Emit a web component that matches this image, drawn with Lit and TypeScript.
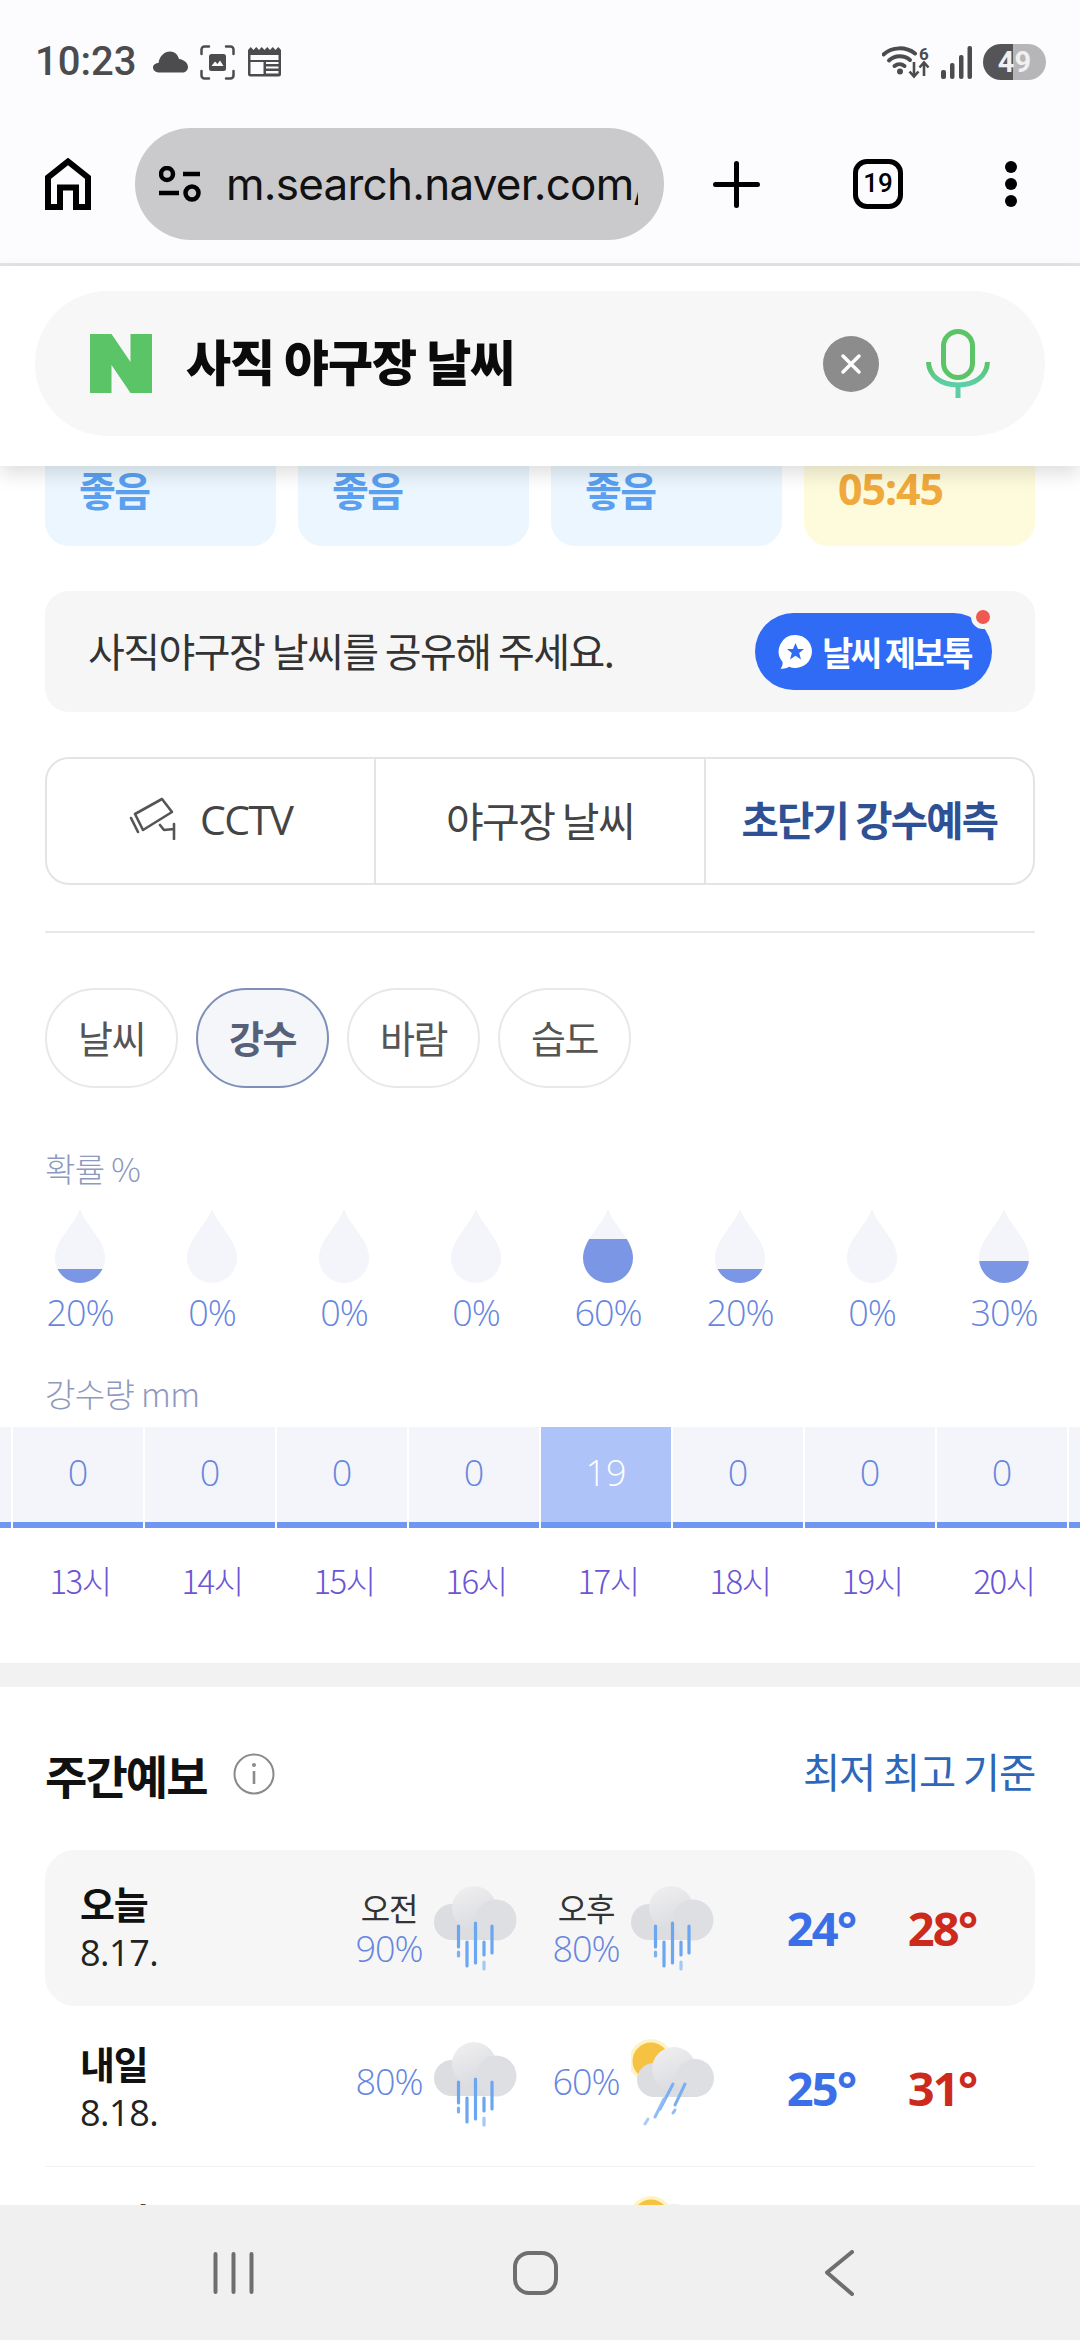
import { LitElement, html, css, svg, unsafeCSS } from "lit";
import { customElement } from "lit/decorators.js";

const KR = unsafeCSS(`"Noto Sans CJK KR", "Noto Sans", sans-serif`);

const dropsData = [20, 0, 0, 0, 60, 20, 0, 30];
const fillH: Record<number, number> = { 0: 0, 20: 14, 30: 22, 60: 44 };
const amounts = ["", "0", "0", "0", "0", "19", "0", "0", "0", ""];
const hours = ["13시", "14시", "15시", "16시", "17시", "18시", "19시", "20시"];
const DROP = "M25 0C28 10 41 24 46 34C49 40 50 45 50 49A25 25 0 0 1 0 49C0 45 1 40 4 34C9 24 22 10 25 0Z";

const cloudDefs = (id: string) => svg`<defs>
  <linearGradient id="${id}" x1="0.3" y1="0" x2="0.7" y2="1"><stop offset="0" stop-color="#eeeef0"/><stop offset="1" stop-color="#d9dadf"/></linearGradient>
</defs>`;

const rainIcon = () => html`<svg class="wx" width="83" height="85" viewBox="0 0 83 85">
  ${cloudDefs("c1")}
  <circle cx="18" cy="36" r="18" fill="#dcdde1"/>
  <rect x="18" y="30" width="46" height="24" fill="#dcdde1"/>
  <circle cx="40" cy="22" r="22" fill="url(#c1)"/>
  <circle cx="62" cy="34" r="20.5" fill="#dedfe3"/>
  <g stroke-width="3.2" stroke-linecap="round" fill="none">
    <path d="M24.5 40V61M33 56V80M41.5 37V77M50 56V69M58 40V67" stroke="#6ba6f0"/>
    <path d="M24.5 66V70" stroke="#7db0f1"/>
    <path d="M50 76V83" stroke="#a3c8f5"/>
  </g>
</svg>`;

const sunIcon = () => html`<svg class="wx" width="83" height="93" viewBox="0 0 83 93">
  ${cloudDefs("c2")}
  <circle cx="20" cy="22" r="22" fill="#fdf3c4"/>
  <circle cx="20" cy="22" r="18.5" fill="#f5c242"/>
  <circle cx="23" cy="41" r="17" fill="#dcdde1"/>
  <rect x="23" y="34" width="44" height="24" fill="#dcdde1"/>
  <circle cx="43" cy="30" r="22" fill="url(#c2)"/>
  <circle cx="64" cy="39" r="19" fill="#dedfe3"/>
  <g stroke-width="3" stroke-linecap="round" fill="none">
    <path d="M42 45L29 70M54 45L44 66" stroke="#78b0f2"/>
    <path d="M33 60L24 78M44 71L42 74" stroke="#8fbdf3"/>
    <path d="M14 85L17 80" stroke="#a9ccf6"/>
  </g>
</svg>`;

@customElement("app-root")
export class AppRoot extends LitElement {
  static styles = css`
    :host { display: block; width: 1080px; height: 2340px; overflow: hidden; background: #fff; font-family: ${KR}; }
    .page { width: 1080px; height: 2340px; display: flex; flex-direction: column; overflow: hidden; }

    .status { height: 124px; flex: none; background: #fcfcff; display: flex; align-items: center; padding: 0 34px 0 35px; color: #4c4c4e; }
    .time { font: 500 40px/1 Roboto, sans-serif; width: 100px; margin-right: 18px; white-space: nowrap; }
    .status svg { display: block; flex: none; }
    .st1 { margin-right: 12px; }
    .st2 { margin-right: 13px; }
    .spacer { flex: 1; }
    .st3 { margin-right: 8px; }
    .st4 { margin-right: 11px; }
    .batt { width: 63px; height: 36px; border-radius: 18px; background: linear-gradient(90deg, #555557 0 48%, #b6b6b8 48% 100%); color: #f0f0f0; font: 700 29px/36px Roboto, sans-serif; text-align: center; }

    .toolbar { height: 142px; flex: none; background: #fcfcff; border-bottom: 3px solid #e3e3ea; box-sizing: border-box; display: flex; align-items: center; padding: 0 0 19px 45px; }
    .toolbar svg { display: block; flex: none; }
    .url { width: 529px; height: 112px; margin-left: 44px; border-radius: 56px; background: #cacacc; display: flex; align-items: center; padding-left: 24px; box-sizing: border-box; flex: none; }
    .urltext { font: 400 44px/1.2 Inter, Roboto, sans-serif; letter-spacing: -0.75px; color: #111; width: 412px; margin-left: 24px; overflow: hidden; white-space: nowrap; }
    .plus { margin-left: 49px; }
    .tabs19 { margin-left: 93px; width: 50px; height: 50px; border: 5.5px solid #000; border-radius: 14px; box-sizing: border-box; font: 500 26px/39px Roboto, sans-serif; color: #000; text-align: center; flex: none; }
    .dots { margin-left: 101px; }

    .searchwrap { height: 200px; flex: none; background: #fff; box-sizing: border-box; padding: 25px 35px 30px; box-shadow: 0 8px 18px rgba(0,0,0,.13); position: relative; z-index: 2; }
    .search { height: 145px; border-radius: 73px; background: #f7f7f7; display: flex; align-items: center; padding-left: 55px; }
    .search svg { display: block; flex: none; }
    .q { font: 900 49px/1 ${KR}; letter-spacing: -1.1px; color: #0b0b0b; margin-left: 34px; width: 637px; white-space: nowrap; padding-bottom: 8px; }
    .clear { width: 56px; height: 56px; }
    .mic { margin-left: 47px; }

    .content { flex: 1; min-height: 0; overflow: hidden; position: relative; }
    .cards { display: flex; gap: 22px; padding: 0 45px; height: 80px; }
    .card { flex: 1; height: 80px; border-radius: 0 0 24px 24px; background: #ebf6fe; color: #5a9ff0; font: 700 40px/46px ${KR}; letter-spacing: -1.5px; padding-left: 34px; box-sizing: border-box; white-space: nowrap; }
    .card.y { background: #fefbdc; color: #f0a93c; font: 700 43px/46px "Noto Sans", sans-serif; letter-spacing: -1.1px; }

    .share { margin: 45px 45px 0; height: 121px; border-radius: 24px; background: #f6f6f6; display: flex; align-items: center; justify-content: space-between; padding: 0 43px; }
    .share span.t { font-size: 40px; letter-spacing: -1.55px; color: #333; white-space: nowrap; padding-bottom: 4px; }
    .btn { width: 237px; height: 77px; border-radius: 39px; background: #2f6bf5; color: #fff; font-weight: 700; font-size: 34px; letter-spacing: -2.5px; display: flex; align-items: center; box-sizing: border-box; padding-left: 23px; gap: 9px; position: relative; white-space: nowrap; }
    .btn i { position: absolute; right: -3px; top: -8px; width: 14px; height: 14px; border-radius: 50%; background: #ee5a4f; border: 5px solid #f6f6f6; }

    .tabs { margin: 45px 45px 0; height: 128px; border: 2px solid #e4e4e4; border-radius: 24px; display: flex; box-sizing: border-box; }
    .tab { flex: 1; display: flex; align-items: center; justify-content: center; font-size: 41px; letter-spacing: -1.6px; color: #444; gap: 24px; padding-bottom: 5px; white-space: nowrap; }
    .tab + .tab { border-left: 2px solid #e4e4e4; }
    .tab.on { font-weight: 700; color: #2e5196; font-size: 40.5px; letter-spacing: -1.8px; }
    .tab .en { font-family: "Open Sans", sans-serif; font-size: 41px; letter-spacing: -1.6px; }

    .rule { margin: 46px 45px 0; height: 2px; background: #e8e8e8; }
    .pills { margin: 55px 45px 0; display: flex; gap: 18px; }
    .pill { width: 133px; height: 100px; border: 2px solid #e8e8e8; border-radius: 50px; box-sizing: border-box; display: flex; align-items: center; justify-content: center; font-size: 38px; letter-spacing: -1.5px; color: #555; padding-bottom: 3px; }
    .pill.on { background: #f4f6fa; border-color: #7e90b8; color: #566078; font-weight: 700; }

    .lab { margin: 60px 45px 0; font-size: 33px; font-weight: 300; line-height: 40px; letter-spacing: -0.6px; color: #8e9abd; }
    .lab.two { margin-top: 40px; }
    .grid8 { display: grid; grid-template-columns: repeat(8, 132px); padding-left: 14px; text-align: center; }
    .drops { margin-top: 21px; height: 74px; }
    .drops svg { display: block; margin: 0 auto; }
    .pcts { margin-top: 10px; font: 300 36px/40px "Open Sans", sans-serif; letter-spacing: -1px; color: #6686de; }
    .bars { margin: 14px 0 0 -119px; height: 101px; display: flex; gap: 2px; width: 1330px; }
    .bar { width: 130px; flex: none; background: #f3f5fb; border-bottom: 6px solid #6f96f0; box-sizing: border-box; text-align: center; color: #6686de; font: 300 36px/92px "Open Sans", sans-serif; }
    .bar.hi { background: #aec3f7; color: #fff; }
    .hours { margin-top: 32px; font-size: 33px; font-weight: 300; line-height: 40px; letter-spacing: -1.6px; color: #6a55d4; }

    .sep { margin-top: 63px; height: 24px; background: #f2f2f2; }
    .head { margin: 57px 45px 0; height: 60px; display: flex; align-items: center; }
    .head h2 { margin: 0; font-size: 46px; font-weight: 700; letter-spacing: -1.9px; color: #111; }
    .head svg { margin-left: 26px; display: block; }
    .head .std { margin-left: auto; font-size: 40.5px; letter-spacing: -1.2px; color: #2e67b8; padding-bottom: 8px; }

    .week { margin: 46px 45px 0; }
    .row { height: 157px; display: grid; grid-template-columns: 299px 90px 83px 24px 90px 83px 72px 70px 51px 70px; align-items: center; border-bottom: 1px solid #f2f2f2; box-sizing: border-box; }
    .row.today { height: 156px; background: #f6f6f6; border-radius: 30px; border-bottom: 0; margin-bottom: 4px; }
    .date { padding-left: 35px; }
    .date b { display: block; font-size: 38px; line-height: 52px; font-weight: 700; letter-spacing: -1.2px; color: #111; margin-top: -2px; }
    .date span { display: block; font: 400 36px/48px "Open Sans", sans-serif; color: #222; letter-spacing: -0.5px; }
    .p { text-align: center; font: 300 36px/42px "Open Sans", sans-serif; letter-spacing: -1px; color: #6686de; padding-bottom: 12px; white-space: nowrap; }
    .today .p { padding-bottom: 0; }
    .p em { display: block; font: 400 32px/42px ${KR}; letter-spacing: -1.2px; color: #333; }
    .wx { display: block; }
    .row:not(.today) .ic { padding-bottom: 8px; }
    .row:not(.today) .ic.sun { padding-bottom: 6px; }
    .row:not(.today) .ic.low { padding-bottom: 0; padding-top: 14px; }
    .lo, .hi2 { font: 700 47px/1 "Open Sans", sans-serif; letter-spacing: -1.8px; text-align: center; white-space: nowrap; }
    .lo { color: #3a6fe8; }
    .hi2 { color: #cc2a1c; }

    .nav { height: 135px; flex: none; background: #f0f0f0; display: flex; align-items: center; position: relative; z-index: 2; padding-left: 213px; }
    .nav svg { display: block; flex: none; }
    .n2 { margin-left: 259px; }
    .n3 { margin-left: 267px; }
  `;

  private row(cls: string, date: string, d: string, a: any, aIcon: any, b: any, bIcon: any, lo: string, hi: string, aCls = "", bCls = "") {
    return html`<div class="row ${cls}">
      <div class="date"><b>${date}</b><span>${d}</span></div>
      <div class="p">${a}</div><div class="ic ${aCls}">${aIcon}</div><div></div>
      <div class="p">${b}</div><div class="ic ${bCls}">${bIcon}</div><div></div>
      <div class="lo">${lo}</div><div></div><div class="hi2">${hi}</div>
    </div>`;
  }

  render() {
    return html`<div class="page">
      <div class="status">
        <div class="time">10:23</div>
        <svg class="st1" width="35" height="24" viewBox="0 0 35 24"><path d="M7 22.5C3 22.5 0 20.5 0 17.5C0 14.5 3 13 5.5 13C6.5 6 11.5 1.5 17 1.5C21.5 1.5 25 4.5 26 9C31 9.5 35 13 35 17C35 20.5 32.5 22.5 29 22.5Z" fill="#4c4c4e"/></svg>
        <svg class="st2" width="35" height="35" viewBox="0 0 35 35" fill="none" stroke="#4c4c4e" stroke-width="2.5" stroke-linecap="round"><path d="M1.5 9V4.5A3 3 0 0 1 4.5 1.5H9M26 1.5H30.5A3 3 0 0 1 33.5 4.5V9M33.5 26V30.5A3 3 0 0 1 30.5 33.5H26M9 33.5H4.5A3 3 0 0 1 1.5 30.5V26"/><rect x="9" y="9" width="17" height="17" rx="2.5" fill="#4c4c4e" stroke="none"/><path d="M11.5 21L15 16.5L17.5 19L20 15.5L23.5 21Z" fill="#fcfcff" stroke="none"/></svg>
        <svg width="33" height="30" viewBox="0 0 33 30"><path d="M0 3L2.75 0L5.5 3L8.25 0L11 3L13.75 0L16.5 3L19.25 0L22 3L24.75 0L27.5 3L30.25 0L33 3V27A2.5 2.5 0 0 1 30.5 29.5H2.5A2.5 2.5 0 0 1 0 27Z" fill="#4c4c4e"/><rect x="2.5" y="8" width="28" height="5" fill="#fcfcff"/><rect x="2.5" y="15" width="13" height="12" fill="#fcfcff"/><path d="M18 15H30.5V17H18ZM18 19.5H30.5V21.5H18ZM18 24H30.5V26.5H18Z" fill="#fcfcff"/></svg>
        <div class="spacer"></div>
        <svg class="st3" width="51" height="36" viewBox="0 0 51 36" fill="none" stroke="#4c4c4e"><path d="M1.5 10.5C10 2.5 24 2.5 33 9.5" stroke-width="4" stroke-linecap="round"/><path d="M7 16.5C13 11 22 11 28 16" stroke-width="4" stroke-linecap="round"/><path d="M12.5 22C15.5 19.5 19.5 19.5 22.5 22" stroke-width="4" stroke-linecap="round"/><circle cx="18" cy="27.5" r="3" fill="#4c4c4e" stroke="none"/><path d="M32 18V32M27.5 27.5L32 32.5L36.5 27.5M42 32V19M37.5 23.5L42 18.5L46.5 23.5" stroke-width="2.6"/><text x="42" y="16" text-anchor="middle" font-family="Roboto, sans-serif" font-weight="700" font-size="17" fill="#4c4c4e" stroke="none">6</text></svg>
        <svg class="st4" width="31" height="33" viewBox="0 0 31 33" fill="#4c4c4e"><rect x="0" y="24" width="5" height="9" rx="2"/><rect x="9" y="17" width="4.5" height="16" rx="2"/><rect x="18" y="9" width="4.5" height="24" rx="2"/><rect x="26.5" y="0" width="4.5" height="33" rx="2"/></svg>
        <div class="batt">49</div>
      </div>

      <div class="toolbar">
        <svg width="46" height="52" viewBox="0 0 46 52" fill="none" stroke="#000" stroke-width="6"><path d="M3 49V19.5L23 3.500L43 19.5V49H31V29.5H15V49Z" stroke-linejoin="miter"/></svg>
        <div class="url">
          <svg width="43" height="36" viewBox="0 0 43 36" fill="none" stroke="#000" stroke-width="4.5"><circle cx="8" cy="8" r="6"/><path d="M24 8H41M0 27H20"/><circle cx="33" cy="27" r="6.5"/></svg>
          <div class="urltext">m.search.naver.com/</div>
        </div>
        <svg class="plus" width="47" height="47" viewBox="0 0 47 47" stroke="#000" stroke-width="5" stroke-linecap="round"><path d="M23.5 2.5V44.5M2.5 23.5H44.5"/></svg>
        <div class="tabs19">19</div>
        <svg class="dots" width="14" height="48" viewBox="0 0 14 48" fill="#000"><circle cx="7" cy="7" r="6"/><circle cx="7" cy="24" r="6"/><circle cx="7" cy="41" r="6"/></svg>
      </div>

      <div class="searchwrap"><div class="search">
        <svg width="62" height="59" viewBox="0 0 62 59"><path d="M0 0H21.5L40.5 28V0H62V59H40.5L21.5 31V59H0Z" fill="#5ac466"/></svg>
        <div class="q">사직 야구장 날씨</div>
        <svg class="clear" viewBox="0 0 56 56"><circle cx="28" cy="28" r="28" fill="#8c8c8c"/><path d="M20 20L36 36M36 20L20 36" stroke="#fff" stroke-width="3.5" stroke-linecap="round"/></svg>
        <svg class="mic" width="64" height="69" viewBox="0 0 64 69" fill="none"><defs><linearGradient id="mg" x1="0" y1="0" x2="0" y2="1"><stop offset="0" stop-color="#5ac466"/><stop offset="1" stop-color="#5ccfa6"/></linearGradient></defs><rect x="17.5" y="2.5" width="29" height="46" rx="14.5" stroke="#5ac466" stroke-width="5"/><path d="M2.5 33C3 47 15 56 32 56C49 56 61 47 61.5 33" stroke="url(#mg)" stroke-width="5"/><path d="M32 56V69" stroke="#5ccfa6" stroke-width="5"/></svg>
      </div></div>

      <div class="content">
        <div class="cards">
          <div class="card">좋음</div><div class="card">좋음</div><div class="card">좋음</div><div class="card y">05:45</div>
        </div>

        <div class="share">
          <span class="t">사직야구장 날씨를 공유해 주세요.</span>
          <div class="btn">
            <svg width="35" height="36" viewBox="0 0 35 36"><path d="M17.5 1A16.5 16.5 0 1 1 11 32.7C8 34.5 5 35 2.5 34.5C4 33 5 30.5 4.5 28A16.5 16.5 0 0 1 17.5 1Z" fill="#fff"/><path d="M17.5 9L20 15H26L21.2 19L23 25.5L17.5 21.7L12 25.5L13.8 19L9 15H15Z" fill="#2f6bf5"/></svg>
            날씨 제보톡<i></i>
          </div>
        </div>

        <div class="tabs">
          <div class="tab">
            <svg width="47" height="43" viewBox="0 0 47 43" fill="none" stroke="#555" stroke-width="2.6" stroke-linejoin="round" stroke-linecap="round"><path d="M6 17L33 2L43 15L14 33Z"/><path d="M2 21L9 35"/><path d="M31 28L35 33L45 32M45 27V42"/></svg>
            <span class="en">CCTV</span>
          </div>
          <div class="tab">야구장 날씨</div>
          <div class="tab on">초단기 강수예측</div>
        </div>

        <div class="rule"></div>

        <div class="pills">
          <div class="pill">날씨</div><div class="pill on">강수</div><div class="pill">바람</div><div class="pill">습도</div>
        </div>

        <div class="lab">확률 %</div>
        <div class="grid8 drops">
          ${dropsData.map((v, i) => html`<svg width="50" height="74" viewBox="0 0 50 74">
            <clipPath id="dc${i}"><rect x="0" y="${74 - fillH[v]}" width="50" height="${fillH[v]}"/></clipPath>
            <path d="${DROP}" fill="#f3f5fb"/>
            <path d="${DROP}" fill="#7b96e4" clip-path="url(#dc${i})"/>
          </svg>`)}
        </div>
        <div class="grid8 pcts">${dropsData.map((v) => html`<div>${v}%</div>`)}</div>

        <div class="lab two">강수량 mm</div>
        <div class="bars">
          ${amounts.map((a) => html`<div class="bar ${a === "19" ? "hi" : ""}">${a}</div>`)}
        </div>
        <div class="grid8 hours">${hours.map((h) => html`<div>${h}</div>`)}</div>

        <div class="sep"></div>

        <div class="head">
          <h2>주간예보</h2>
          <svg width="42" height="42" viewBox="0 0 42 42" fill="none"><circle cx="21" cy="21" r="19.5" stroke="#8a8a8a" stroke-width="2"/><path d="M21 18V31" stroke="#8a8a8a" stroke-width="2.6"/><circle cx="21" cy="12" r="2" fill="#8a8a8a"/></svg>
          <div class="std">최저 최고 기준</div>
        </div>

        <div class="week">
          ${this.row("today", "오늘", "8.17.", html`<em>오전</em>90%`, rainIcon(), html`<em>오후</em>80%`, rainIcon(), "24°", "28°")}
          ${this.row("", "내일", "8.18.", "80%", rainIcon(), "60%", sunIcon(), "25°", "31°", "", "sun")}
          ${this.row("", "모레", "8.19.", "30%", rainIcon(), "20%", sunIcon(), "25°", "32°", "low", "sun")}
        </div>
      </div>

      <div class="nav">
        <svg width="41" height="42" viewBox="0 0 41 42" stroke="#6e6e6e" stroke-width="4" stroke-linecap="round"><path d="M2.5 2V40M20.5 2V40M38.5 2V40"/></svg>
        <svg class="n2" width="45" height="44" viewBox="0 0 45 44" fill="none" stroke="#6e6e6e" stroke-width="4"><rect x="2" y="2" width="41" height="40" rx="14"/></svg>
        <svg class="n3" width="29" height="46" viewBox="0 0 29 46" fill="none" stroke="#6e6e6e" stroke-width="4" stroke-linecap="round" stroke-linejoin="round"><path d="M27 2L2 22.5L27 44"/></svg>
      </div>
    </div>`;
  }
}
